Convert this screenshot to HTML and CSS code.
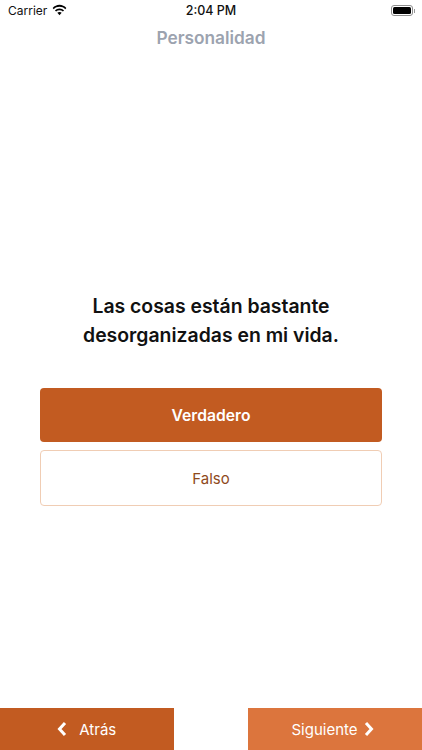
FILE: index.html
```html
<!DOCTYPE html>
<html lang="es">
<head>
<meta charset="utf-8">
<title>Personalidad</title>
<link rel="stylesheet" href="styles.css">
</head>
<body>
<div class="screen">
  <div class="status">
    <div class="status-left">
      <span>Carrier</span>
      <svg class="wifi" viewBox="0 0 16 12" aria-hidden="true"><path d="M8 2.600c2.400 0 4.500.9 6.100 2.500l1.200-1.300C13.400 1.900 10.800.5 8 .5S2.600 1.900.7 3.800l1.200 1.300C3.500 3.500 5.600 2.600 8 2.600z"/><path d="M8 6.300c1.400 0 2.600.5 3.600 1.400l1.300-1.300C11.600 5.200 9.900 4.300 8 4.300s-3.600.9-4.900 2.100l1.300 1.300c1-.9 2.200-1.400 3.600-1.400z"/><path d="M8 8.100c-.9 0-1.700.3-2.300.9L8 11.500 10.300 9c-.6-.6-1.400-.9-2.300-.9z"/></svg>
    </div>
    <span class="status-time">2:04 PM</span>
    <div class="battery"><span class="battery-body"><span class="battery-fill"></span></span><span class="battery-cap"></span></div>
  </div>
  <h1 class="title">Personalidad</h1>
  <main class="content">
    <p class="question">Las cosas están bastante desorganizadas en mi vida.</p>
    <div class="options">
      <button class="option option-selected">Verdadero</button>
      <button class="option option-plain">Falso</button>
    </div>
  </main>
  <nav class="nav">
    <button class="nav-btn nav-back">
      <svg class="chev" viewBox="0 0 10 16" aria-hidden="true"><path d="M8 2 2.500 8 8 14"/></svg>
      <span>Atrás</span>
    </button>
    <button class="nav-btn nav-next">
      <span>Siguiente</span>
      <svg class="chev" viewBox="0 0 10 16" aria-hidden="true"><path d="M2 2l5.500 6L2 14"/></svg>
    </button>
  </nav>
</div>
</body>
</html>
```
FILE: styles.css
```css
* { box-sizing: border-box; }
html, body { margin: 0; padding: 0; background: #fff; }
body { font-family: Inter, "Open Sans", sans-serif; }
.screen { width: 422px; height: 750px; display: flex; flex-direction: column; overflow: hidden; }
.status { height: 21px; flex: none; display: grid; grid-template-columns: 1fr auto 1fr; align-items: center; padding: 0 8px; font-family: Inter, "Liberation Sans", sans-serif; font-size: 12px; color: #111; }
.status-left { display: flex; align-items: center; gap: 5px; }
.wifi { width: 15px; height: 12px; fill: #000; margin-top: -1px; }
.status-time { font-weight: 500; font-size: 12.500px; }
.battery { justify-self: end; display: flex; align-items: center; margin-right: -1px; }
.battery-body { width: 22px; height: 11px; border: 1px solid #8e8e8e; border-radius: 3px; padding: 1px; display: block; }
.battery-fill { display: block; height: 100%; background: #000; border-radius: 1.500px; }
.battery-cap { width: 1px; height: 4px; background: #999; margin-left: 1px; }
.title { margin: 7px 0 0; text-align: center; font-size: 17.300px; line-height: 20px; font-weight: 600; color: #9ca3af; }
.content { flex: 1; display: flex; flex-direction: column; padding: 0 40px; }
.question { margin: 244px 0 0; text-align: center; font-size: 19.400px; line-height: 29px; font-weight: 600; color: #111; }
.options { margin-top: 38px; display: flex; flex-direction: column; gap: 8px; }
.option { font: inherit; border-radius: 4px; padding: 0; }
.option-selected { height: 54px; background: #c25b21; border: 0; color: #fff; font-weight: 600; font-size: 15.700px; }
.option-plain { height: 56px; background: #fff; border: 1.500px solid #f0cdb4; color: #8f4a1c; font-size: 15px; }
.nav { flex: none; height: 42px; display: flex; justify-content: space-between; }
.nav-btn { font: inherit; font-size: 15px; width: 174px; height: 42px; border: 0; padding: 0; color: #fff; display: flex; align-items: center; justify-content: center; }
.nav-back { background: #c25b21; gap: 12px; width: 173.500px; }
.nav-next { background: #dc753d; gap: 6px; padding-right: 5px; }
.chev { width: 10px; height: 16px; fill: none; stroke: #fff; stroke-width: 3px; }
```
